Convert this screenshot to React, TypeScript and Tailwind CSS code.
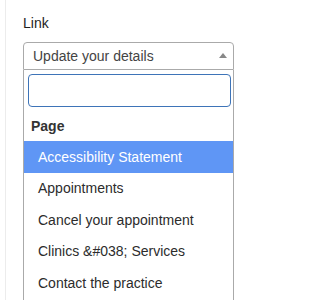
import React from "react";

export default function App() {
  const items = [
    "Accessibility Statement",
    "Appointments",
    "Cancel your appointment",
    "Clinics &#038; Services",
    "Contact the practice",
  ];
  return (
    <div
      className="w-[246px] h-[300px] bg-white overflow-hidden flex"
      style={{ fontFamily: "'Liberation Sans', Arial, sans-serif" }}
    >
      <div className="w-[5px] shrink-0" />
      <div className="w-px shrink-0 bg-[#ececec]" />
      <div className="flex-1 pl-[17px] pt-[13px]">
        <div className="text-[14px] leading-[20px] text-[#1e1e1e]">Link</div>
        <div className="mt-[9px] w-[211px] h-[28px] border border-[#aaa] rounded-t-[4px] flex items-center justify-between pl-[9px] pr-[6px] text-[14px] text-[#444]">
          <span>Update your details</span>
          <svg width="8" height="5" viewBox="0 0 8 5" className="mb-[1px]">
            <path d="M0 5 L4 0 L8 5 Z" fill="#888" />
          </svg>
        </div>
        <div className="w-[211px] h-[300px] border-x border-[#aaa]">
          <div className="pt-[4px] pl-[4px]">
            <div className="w-[203px] h-[33px] border-[1.5px] border-[#3e74b8] rounded-[4px]" />
          </div>
          <div className="h-[34px] pl-[7px] pt-[5px] flex items-center text-[14px] font-bold text-[#333]">
            Page
          </div>
          {items.map((t, i) => (
            <div
              key={t}
              className={
                i === 0
                  ? "h-[31.5px] pl-[14px] pt-[1px] flex items-center text-[14px] bg-[#5f96f5] text-white"
                  : "h-[31.5px] pl-[14px] pt-[1px] flex items-center text-[14px] text-[#2c2c2c]"
              }
            >
              {t}
            </div>
          ))}
        </div>
      </div>
    </div>
  );
}
